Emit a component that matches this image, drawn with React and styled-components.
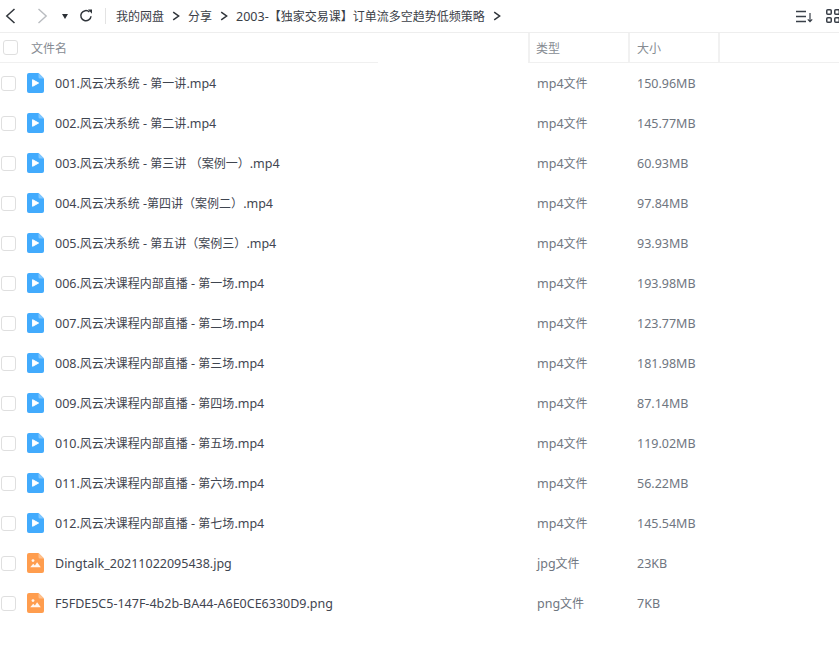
import React from 'react';
import styled, { createGlobalStyle } from 'styled-components';

const Global = createGlobalStyle`
  html, body { margin: 0; padding: 0; background: #fff; }
  body { font-family: "Noto Sans", "Noto Sans CJK SC", sans-serif; }
`;
const Page = styled.div`
  width: 839px; height: 649px; overflow: hidden; background: #fff; color: #424e67;
`;
const Toolbar = styled.div`
  height: 32px; display: flex; align-items: center; border-bottom: 1px solid #eeeeee; box-sizing: content-box;
`;
const NavIcon = styled.svg`
  display: block; flex: none; margin-left: ${p => p.$ml || 0}px;
`;
const LastIcon = styled(NavIcon)` margin-right: -1px; `;
const Divider = styled.div`
  width: 1px; height: 16px; background: #e3e3e3; margin: 0 10px 0 12px; flex: none;
`;
const Crumb = styled.span`
  font-size: 12.5px; color: #3b4047; white-space: nowrap; line-height: 26px;
`;
const Han = styled.span`
  font-family: "Noto Sans CJK SC", sans-serif; font-size: 12px;
`;
const Sep = styled.svg`
  display: block; flex: none; margin: 0 8px 0 8px;
`;
const Spacer = styled.div` flex: 1; `;
const Header = styled.div`
  height: 29px; display: grid; grid-template-columns: 528px 100px 90px 1fr;
`;
const HeaderRule = styled.div`
  height: 1px; display: grid; grid-template-columns: 378px 150px 1fr;
`;
const RuleSeg = styled.div` background: ${p => p.$on ? '#f0f0f0' : 'transparent'}; `;
const HeaderCell = styled.div`
  display: flex; align-items: center; font-size: 12px; color: #868b92; box-sizing: border-box;
  padding-left: ${p => p.$pl}px;
  border-left: ${p => p.$line ? '2px solid #f1f1f1' : 'none'};
`;
const Box = styled.span`
  width: 13px; height: 13px; border: 1px solid #dfdfdf; border-radius: 3px; flex: none; display: block; background: #fff;
`;
const HeadBox = styled(Box)` margin-right: 13px; margin-left: 3px; `;
const Row = styled.div`
  height: 40px; display: grid; grid-template-columns: 528px 100px 90px 1fr; align-items: center;
`;
const NameCell = styled.div`
  display: flex; align-items: center; padding-left: 1px; min-width: 0;
`;
const RowBox = styled(Box)` margin-right: 11px; `;
const Name = styled.span`
  font-size: 12.5px; color: #3f4550; margin-left: 11px; white-space: nowrap; line-height: 18px; margin-top: 1px;
`;
const Meta = styled.span`
  font-size: 12.5px; color: #6f767f; padding-left: ${p => p.$pl}px; white-space: nowrap; line-height: 18px; margin-top: 1px;
`;
const List = styled.div``;

const VideoIcon = () => (
  <svg width="17" height="20" viewBox="0 0 17 20">
    <path d="M2 0h9.5L17 5.5V18a2 2 0 0 1-2 2H2a2 2 0 0 1-2-2V2a2 2 0 0 1 2-2z" fill="#42abfd" />
    <path d="M11.5 0L17 5.5H13a1.5 1.5 0 0 1-1.5-1.5z" fill="#7fc7ff" />
    <path d="M5.6 6.7l6 3.3-6 3.3z" fill="#fff" stroke="#fff" strokeWidth="1" strokeLinejoin="round" />
  </svg>
);
const ImageIcon = () => (
  <svg width="17" height="20" viewBox="0 0 17 20">
    <path d="M2 0h9.5L17 5.5V18a2 2 0 0 1-2 2H2a2 2 0 0 1-2-2V2a2 2 0 0 1 2-2z" fill="#ff9d4e" />
    <path d="M11.5 0L17 5.5H13a1.5 1.5 0 0 1-1.5-1.5z" fill="#ffc08c" />
    <circle cx="6" cy="7.6" r="1.4" fill="#fff" opacity=".9" />
    <path d="M3.2 14.2l3-3.4 1.7 1.6 2.2-3.2 3.7 5z" fill="#fff" opacity=".92" />
  </svg>
);

// The source UI sets Latin slightly wider relative to its CJK glyphs, so Han runs get their own size.
const Mixed = ({ text }) =>
  text.split(/([\u3000-\u303f\u4e00-\u9fff\uff00-\uffef]+)/).map((part, i) =>
    i % 2 ? <Han key={i}>{part}</Han> : part
  );

const files = [
  ['001.风云决系统 - 第一讲.mp4', 'mp4文件', '150.96MB', 'v'],
  ['002.风云决系统 - 第二讲.mp4', 'mp4文件', '145.77MB', 'v'],
  ['003.风云决系统 - 第三讲 （案例一）.mp4', 'mp4文件', '60.93MB', 'v'],
  ['004.风云决系统 -第四讲（案例二）.mp4', 'mp4文件', '97.84MB', 'v'],
  ['005.风云决系统 - 第五讲（案例三）.mp4', 'mp4文件', '93.93MB', 'v'],
  ['006.风云决课程内部直播 - 第一场.mp4', 'mp4文件', '193.98MB', 'v'],
  ['007.风云决课程内部直播 - 第二场.mp4', 'mp4文件', '123.77MB', 'v'],
  ['008.风云决课程内部直播 - 第三场.mp4', 'mp4文件', '181.98MB', 'v'],
  ['009.风云决课程内部直播 - 第四场.mp4', 'mp4文件', '87.14MB', 'v'],
  ['010.风云决课程内部直播 - 第五场.mp4', 'mp4文件', '119.02MB', 'v'],
  ['011.风云决课程内部直播 - 第六场.mp4', 'mp4文件', '56.22MB', 'v'],
  ['012.风云决课程内部直播 - 第七场.mp4', 'mp4文件', '145.54MB', 'v'],
  ['Dingtalk_20211022095438.jpg', 'jpg文件', '23KB', 'i'],
  ['F5FDE5C5-147F-4b2b-BA44-A6E0CE6330D9.png', 'png文件', '7KB', 'i'],
];

const Chevron = () => (
  <Sep width="8" height="10" viewBox="0 0 8 10">
    <path d="M1.2 1.2L6.6 5 1.2 8.8" fill="none" stroke="#2f343a" strokeWidth="1.5" />
  </Sep>
);

export default function App() {
  return (
    <Page>
      <Global />
      <Toolbar>
        <NavIcon $ml={5} width="11" height="16" viewBox="0 0 11 16">
          <path d="M9.5 1L1.8 8l7.7 7" fill="none" stroke="#30353b" strokeWidth="1.5" />
        </NavIcon>
        <NavIcon $ml={21} width="11" height="16" viewBox="0 0 11 16">
          <path d="M1.5 1l7.7 7-7.7 7" fill="none" stroke="#b9bcc0" strokeWidth="1.4" />
        </NavIcon>
        <NavIcon $ml={14} width="6" height="5" viewBox="0 0 6 5">
          <path d="M0 0h6L3 5z" fill="#2b2f35" />
        </NavIcon>
        <NavIcon $ml={11} width="14" height="14" viewBox="0 0 14 14">
          <path d="M12 7.2A5.1 5.1 0 1 1 10.4 3" fill="none" stroke="#2f343a" strokeWidth="1.5" />
          <path d="M9 0.6h4v4.2z" fill="#2f343a" />
        </NavIcon>
        <Divider />
        <Crumb><Mixed text="我的网盘" /></Crumb><Chevron />
        <Crumb><Mixed text="分享" /></Crumb><Chevron />
        <Crumb><Mixed text="2003-【独家交易课】订单流多空趋势低频策略" /></Crumb><Chevron />
        <Spacer />
        <NavIcon width="17" height="13" viewBox="0 0 17 13">
          <path d="M0 1.5h10M0 6.5h10M0 11.5h10" stroke="#3a4049" strokeWidth="1.4" fill="none" />
          <path d="M14 3v8.5M11.8 9.3l2.2 2.4 2.2-2.4" stroke="#3a4049" strokeWidth="1.2" fill="none" />
        </NavIcon>
        <LastIcon $ml={13} width="14" height="14" viewBox="0 0 14 14">
          <rect x="0.75" y="0.75" width="4.5" height="4.5" rx="1" fill="none" stroke="#3a4049" strokeWidth="1.5" />
          <rect x="8.75" y="0.75" width="4.5" height="4.5" rx="1" fill="none" stroke="#3a4049" strokeWidth="1.5" />
          <rect x="0.75" y="8.75" width="4.5" height="4.5" rx="1" fill="none" stroke="#3a4049" strokeWidth="1.5" />
          <rect x="8.75" y="8.75" width="4.5" height="4.5" rx="1" fill="none" stroke="#3a4049" strokeWidth="1.5" />
        </LastIcon>
      </Toolbar>
      <Header>
        <HeaderCell $pl={0}><HeadBox />文件名</HeaderCell>
        <HeaderCell $pl={6} $line>类型</HeaderCell>
        <HeaderCell $pl={7} $line>大小</HeaderCell>
        <HeaderCell $pl={0} $line />
      </Header>
      <HeaderRule>
        <RuleSeg $on /><RuleSeg /><RuleSeg $on />
      </HeaderRule>
      <List>
        {files.map(([name, type, size, kind]) => (
          <Row key={name}>
            <NameCell>
              <RowBox />
              {kind === 'v' ? <VideoIcon /> : <ImageIcon />}
              <Name><Mixed text={name} /></Name>
            </NameCell>
            <Meta $pl={9}><Mixed text={type} /></Meta>
            <Meta $pl={9}>{size}</Meta>
          </Row>
        ))}
      </List>
    </Page>
  );
}
